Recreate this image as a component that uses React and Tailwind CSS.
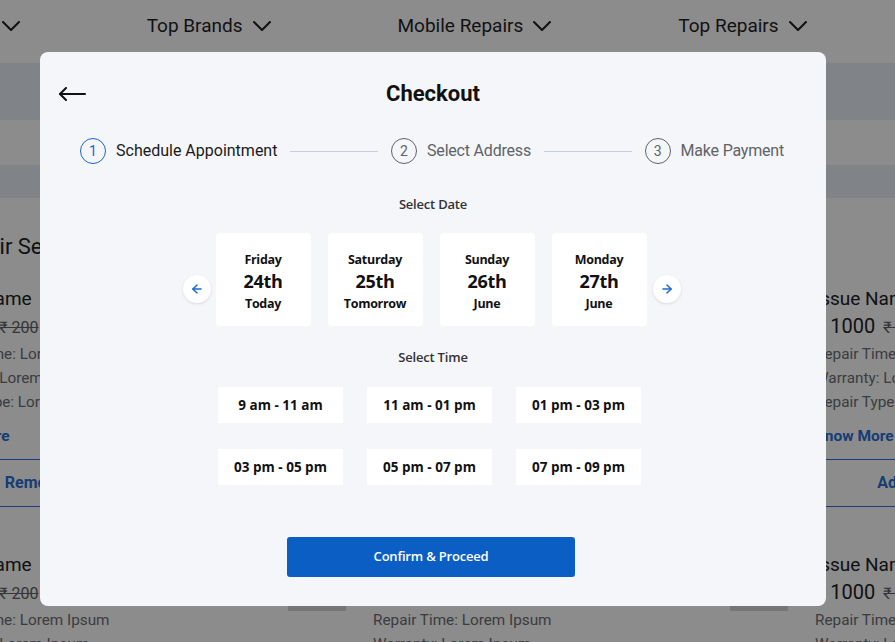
import { Fragment } from 'react';
import { ArrowLeft, ArrowRight } from 'lucide-react';

const navItems = ['Services', 'Top Brands', 'Mobile Repairs', 'Top Repairs'];

const dates = [
    { day: 'Friday', date: '24th', note: 'Today' },
    { day: 'Saturday', date: '25th', note: 'Tomorrow' },
    { day: 'Sunday', date: '26th', note: 'June' },
    { day: 'Monday', date: '27th', note: 'June' },
];

const slots = ['9 am - 11 am', '11 am - 01 pm', '01 pm - 03 pm', '03 pm - 05 pm', '05 pm - 07 pm', '07 pm - 09 pm'];

const steps = ['Schedule Appointment', 'Select Address', 'Make Payment'];

const columns = [
    { action: 'Remove' },
    { action: 'Remove' },
    { action: 'Add to Cart' },
];

function Chevron() {
    return (
        <svg width="18" height="10" viewBox="0 0 18 10" fill="none" stroke="currentColor" strokeWidth="2" strokeLinecap="round" strokeLinejoin="round">
            <polyline points="1,1 9,9 17,1" />
        </svg>
    );
}

function LongArrow() {
    return (
        <svg width="28" height="14" viewBox="0 0 28 14" fill="none" stroke="#111" strokeWidth="2" strokeLinecap="round" strokeLinejoin="round">
            <line x1="2" y1="7" x2="27" y2="7" />
            <polyline points="8,1 2,7 8,13" />
        </svg>
    );
}

function ServiceCard({ action }) {
    return (
        <div className="flex flex-col">
            <div className="flex gap-[27px]">
                <div className="w-[58px] h-[59px] bg-[#d8d8d8] shrink-0"></div>
                <div className="flex flex-col">
                    <span className="text-[19px] leading-[26px] text-[#202124]">Issue Name</span>
                    <div className="flex items-baseline gap-2 mt-px">
                        <span className="text-[20px] leading-[26px] text-[#202124]">₹ 1000</span>
                        <span className="text-[16px] text-[#5f6368] line-through">₹ 200</span>
                    </div>
                    <span className="text-[15.3px] leading-[24px] text-[#6b6f74] mt-[2px]">Repair Time: Lorem Ipsum</span>
                    <span className="text-[15.3px] leading-[24px] text-[#6b6f74]">Warranty: Lorem Ipsum</span>
                    <span className="text-[15.3px] leading-[24px] text-[#6b6f74]">Repair Type: Lorem Ipsum</span>
                    <span className="text-[15.5px] leading-[22px] font-bold text-[#2a6fd6] mt-[11px]">Know More</span>
                </div>
            </div>
            <div className="mt-[12px] h-[48px] border-y border-[#2a6fd6] flex items-center justify-center">
                <span className="text-[16px] font-bold text-[#2a6fd6]">{action}</span>
            </div>
        </div>
    );
}

export default function App() {
    return (
        <div className="relative w-[895px] h-[642px] overflow-hidden bg-white font-['Roboto',sans-serif]">
            {/* Page behind the dialog */}
            <nav className="h-[57px] pb-[5px] flex items-center gap-[127px] ml-[-80px] text-[19px] text-[#1f1f1f]">
                {navItems.map((item) => (
                    <div key={item} className="flex items-center gap-[10px] whitespace-nowrap">
                        <span>{item}</span>
                        <Chevron />
                    </div>
                ))}
            </nav>
            <div className="h-[6px]"></div>
            <div className="h-[57px] bg-[#eaf0fa]"></div>
            <div className="h-[45px]"></div>
            <div className="h-[33px] bg-[#eaf0fa]"></div>

            <h2 className="mt-[35px] ml-[-50px] text-[22px] leading-[28px] text-[#202124] whitespace-nowrap">Repair Services</h2>

            <div className="mt-[25px] ml-[-154px] flex gap-[66px]">
                {columns.map((col, i) => (
                    <div key={i} className="w-[376px] shrink-0 flex flex-col gap-[45px]">
                        <ServiceCard action={col.action} />
                        <ServiceCard action={col.action} />
                    </div>
                ))}
            </div>

            {/* Overlay + dialog */}
            <div className="absolute inset-0 bg-black/45 flex items-start pt-[52px] pl-[40px]">
                <div className="w-[786px] h-[554px] bg-[#f4f6fa] rounded-[8px] pt-[25px] flex flex-col items-center">
                    <div className="w-full px-[18px] grid grid-cols-[1fr_auto_1fr] items-center h-[30px]">
                        <div className="flex items-center">
                            <LongArrow />
                        </div>
                        <h1 className="text-[22px] font-bold text-[#111]">Checkout</h1>
                        <div></div>
                    </div>

                    {/* Stepper */}
                    <div className="w-full pl-[40px] pr-[42px] mt-[31px] flex items-center h-[26px]">
                        {steps.map((step, i) => (
                            <Fragment key={step}>
                                <div className={`w-[26px] h-[26px] rounded-full border flex items-center justify-center text-[14px] shrink-0 ${i === 0 ? 'border-[#1967d2] text-[#1967d2]' : 'border-[#5f6368] text-[#5f6368]'}`}>
                                    {i + 1}
                                </div>
                                <span className={`ml-[10px] text-[16px] whitespace-nowrap ${i === 0 ? 'text-[#1a1a1a]' : 'text-[#5f6368] tracking-[-0.2px]'}`}>{step}</span>
                                {i < steps.length - 1 && (
                                    <div className="flex-1 h-px bg-[#c5cee4] mx-[13px]"></div>
                                )}
                            </Fragment>
                        ))}
                    </div>

                    <div className="font-['Open_Sans',sans-serif] flex flex-col items-center">
                        <p className="mt-[31px] text-[13px] leading-[18px] font-semibold text-[#333] tracking-[-0.2px]">Select Date</p>

                        <div className="mt-[20px] mr-[3px] flex items-center gap-[5px]">
                            <button className="mt-[19px] w-[28px] h-[28px] rounded-full bg-white shadow-[0_1px_3px_rgba(0,0,0,0.12)] flex items-center justify-center text-[#1967d2]">
                                <ArrowLeft size={14} strokeWidth={2.5} />
                            </button>
                            <div className="flex gap-[17px]">
                                {dates.map((d) => (
                                    <div key={d.date} className="w-[95px] h-[93px] bg-white rounded-[4px] flex flex-col items-center justify-center pt-[5px] text-[#111] tracking-[-0.3px]">
                                        <span className="text-[12.5px] leading-[18px] font-bold">{d.day}</span>
                                        <span className="text-[18px] leading-[24px] font-bold">{d.date}</span>
                                        <span className="mt-[2px] text-[12.5px] leading-[18px] font-bold">{d.note}</span>
                                    </div>
                                ))}
                            </div>
                            <button className="mt-[19px] w-[28px] h-[28px] ml-px rounded-full bg-white shadow-[0_1px_3px_rgba(0,0,0,0.12)] flex items-center justify-center text-[#1967d2]">
                                <ArrowRight size={14} strokeWidth={2.5} />
                            </button>
                        </div>

                        <p className="mt-[22px] text-[13px] leading-[18px] font-semibold text-[#333] tracking-[-0.2px]">Select Time</p>

                        <div className="mt-[21px] mr-[7px] grid grid-cols-[125px_125px_125px] gap-x-[24px] gap-y-[26px]">
                            {slots.map((s) => (
                                <div key={s} className="h-[36px] bg-white flex items-center justify-center text-[13.5px] font-bold text-[#111]">
                                    {s}
                                </div>
                            ))}
                        </div>

                        <button className="mt-[52px] mr-[4px] w-[288px] h-[40px] rounded-[3px] bg-[#0a5ec4] text-white text-[13px] font-semibold tracking-[-0.2px]">
                            Confirm &amp; Proceed
                        </button>
                    </div>
                </div>
            </div>
        </div>
    );
}
